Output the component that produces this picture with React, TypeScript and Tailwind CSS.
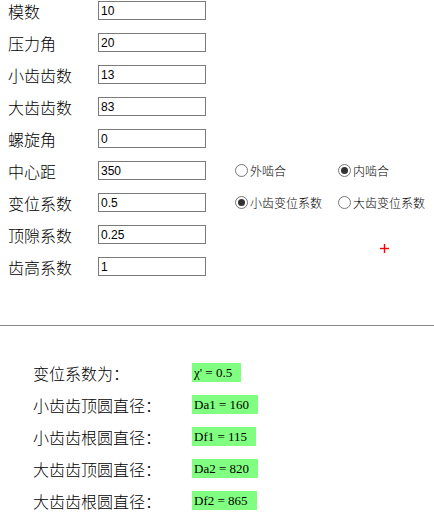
import React from "react";

const cjk = "font-['SimSun','Noto_Sans_CJK_SC',sans-serif] font-light";

const fields = [
  { label: "模数", value: "10" },
  { label: "压力角", value: "20" },
  { label: "小齿齿数", value: "13" },
  { label: "大齿齿数", value: "83" },
  { label: "螺旋角", value: "0" },
  { label: "中心距", value: "350" },
  { label: "变位系数", value: "0.5" },
  { label: "顶隙系数", value: "0.25" },
  { label: "齿高系数", value: "1" },
];

const radios: Record<number, { label: string; checked: boolean }[]> = {
  5: [
    { label: "外啮合", checked: false },
    { label: "内啮合", checked: true },
  ],
  6: [
    { label: "小齿变位系数", checked: true },
    { label: "大齿变位系数", checked: false },
  ],
};

const results = [
  { label: "变位系数为：", value: "χ' = 0.5" },
  { label: "小齿齿顶圆直径：", value: "Da1 = 160" },
  { label: "小齿齿根圆直径：", value: "Df1 = 115" },
  { label: "大齿齿顶圆直径：", value: "Da2 = 820" },
  { label: "大齿齿根圆直径：", value: "Df2 = 865" },
];

function Radio({ label, checked }: { label: string; checked: boolean }) {
  return (
    <div className="flex items-center w-[103px] shrink-0">
      <span className="w-[13px] h-[13px] shrink-0 rounded-full border border-[#777] bg-white flex items-center justify-center">
        {checked && <span className="w-[7px] h-[7px] rounded-full bg-[#333]" />}
      </span>
      <span className={`ml-[2px] text-[12px] leading-none text-black whitespace-nowrap ${cjk}`}>{label}</span>
    </div>
  );
}

export default function App() {
  return (
    <div className="w-[434px] h-[516px] bg-white overflow-hidden">
      <div className="relative h-[325px] pt-[1px]">
        {fields.map((f, i) => (
          <div key={f.label} className="flex items-center h-[19px] mb-[13px]">
            <div className={`w-[98px] shrink-0 pl-[8px] text-[16px] leading-none text-black ${cjk}`}>
              {f.label}
            </div>
            <div className="w-[108px] h-[19px] shrink-0 border border-[#7a7a7a] bg-white flex items-center pl-[2px] text-[12px] text-black font-['Liberation_Sans',sans-serif]">
              {f.value}
            </div>
            {radios[i] && (
              <div className="flex items-center ml-[29px]">
                {radios[i].map((r) => (
                  <Radio key={r.label} {...r} />
                ))}
              </div>
            )}
          </div>
        ))}
        <svg className="absolute left-[380px] top-[244px]" width="9" height="9" viewBox="0 0 9 9">
          <line x1="0" y1="4.5" x2="9" y2="4.5" stroke="#ff0000" strokeWidth="1.4" />
          <line x1="4.5" y1="0" x2="4.5" y2="9" stroke="#ff0000" strokeWidth="1.4" />
        </svg>
      </div>
      <div className="h-[1px] bg-[#888]" />
      <div className="pt-[37px]">
        {results.map((r) => (
          <div key={r.label} className="flex items-center h-[19px] mb-[13px]">
            <div className={`w-[192px] shrink-0 pl-[33px] text-[16px] leading-none text-black ${cjk}`}>
              {r.label}
            </div>
            <div className="h-[19px] bg-[#80ff80] flex items-center pl-[2px] pr-[9px] text-[13px] text-black font-['Liberation_Serif',serif]">
              {r.value}
            </div>
          </div>
        ))}
      </div>
    </div>
  );
}
